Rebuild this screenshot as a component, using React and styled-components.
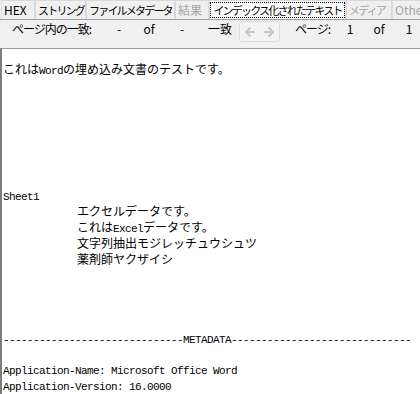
import React from "react";
import styled, { createGlobalStyle } from "styled-components";
import { ArrowLeft, ArrowRight } from "lucide-react";

const GlobalStyle = createGlobalStyle`
    html, body {
        margin: 0;
        padding: 0;
        background: #ffffff;
    }
`;

const tabs = [
    { label: "HEX", width: 34 },
    { label: "ストリング", width: 51, tight: true },
    { label: "ファイルメタデータ", width: 89, tight: true },
    { label: "結果", width: 34, disabled: true },
    { label: "インデックス化されたテキスト", width: 137, selected: true, tight: true },
    { label: "メディア", width: 46, disabled: true, tight: true },
    { label: "Other", width: 45, disabled: true },
];

const lines = [
    { text: "これはWordの埋め込み文書のテストです。" },
    { text: "" },
    { text: "" },
    { text: "" },
    { text: "" },
    { text: "" },
    { text: "" },
    { text: "" },
    { text: "Sheet1" },
    { text: "エクセルデータです。", indent: true },
    { text: "これはExcelデータです。", indent: true },
    { text: "文字列抽出モジレッチュウシュツ", indent: true },
    { text: "薬剤師ヤクザイシ", indent: true },
    { text: "" },
    { text: "" },
    { text: "" },
    { text: "" },
    { text: "-".repeat(30) + "METADATA" + "-".repeat(30) },
    { text: "" },
    { text: "Application-Name: Microsoft Office Word" },
    { text: "Application-Version: 16.0000" },
];

// split a line into ascii / wide runs so each gets its own font
const splitRuns = (text) => {
    const runs = [];
    for (const ch of text) {
        const wide = ch.charCodeAt(0) > 0x7f;
        const last = runs[runs.length - 1];
        if (last && last.wide === wide) last.text += ch;
        else runs.push({ wide, text: ch });
    }
    return runs;
};

const App = () => {
    return (
        <>
            <GlobalStyle />
            <Window>
                <TabBar>
                    {tabs.map((tab) => (
                        <Tab
                            key={tab.label}
                            $width={tab.width}
                            $disabled={tab.disabled}
                            $selected={tab.selected}
                            $tight={tab.tight}
                        >
                            <span>{tab.label}</span>
                        </Tab>
                    ))}
                </TabBar>
                <Toolbar>
                    <Cell $left={12} $width={94} $tight>ページ内の一致:</Cell>
                    <Cell $width={26} $center>-</Cell>
                    <Cell $width={34} $center>of</Cell>
                    <Cell $width={32} $center>-</Cell>
                    <Cell $left={10} $width={27}>一致</Cell>
                    <NavBox>
                        <NavButton>
                            <ArrowLeft size={14} strokeWidth={3.2} />
                        </NavButton>
                        <NavButton>
                            <ArrowRight size={14} strokeWidth={3.2} />
                        </NavButton>
                    </NavBox>
                    <Cell $left={15} $width={44} $tight>ページ:</Cell>
                    <Cell $width={22} $center>1</Cell>
                    <Cell $width={36} $center>of</Cell>
                    <Cell $width={24} $center>1</Cell>
                </Toolbar>
                <TextArea>
                    {lines.map((line, i) => (
                        <TextLine key={i} $indent={line.indent}>
                            {splitRuns(line.text).map((run, j) =>
                                run.wide ? <Wide key={j}>{run.text}</Wide> : <Narrow key={j}>{run.text}</Narrow>
                            )}
                        </TextLine>
                    ))}
                </TextArea>
            </Window>
        </>
    );
};

export default App;

const Window = styled.div`
    width: 420px;
    height: 394px;
    overflow: hidden;
    display: flex;
    flex-direction: column;
    background: #f0f0f0;
    font-family: "Noto Sans CJK JP", "Noto Sans", sans-serif;
`;

const TabBar = styled.div`
    display: flex;
    height: 19px;
    padding-left: 1px;
    background: #f0f0f0;
    white-space: nowrap;
`;

const Tab = styled.div`
    flex: none;
    box-sizing: border-box;
    width: ${(p) => p.$width}px;
    height: 19px;
    padding: 1px 0 0;
    border: 1px solid #d9d9d9;
    border-bottom: none;
    background: ${(p) => (p.$selected ? "#ffffff" : "#f0f0f0")};
    color: ${(p) => (p.$disabled ? "#a3a3a3" : "#000000")};
    font-size: ${(p) => (p.$tight ? 11 : 12)}px;
    line-height: 16px;
    text-align: ${(p) => (p.$selected ? "center" : "left")};
    overflow: hidden;

    & span {
        display: block;
        padding-left: ${(p) => (p.$selected ? 0 : 2)}px;
        outline: ${(p) => (p.$selected ? "1px dotted #000000" : "none")};
        outline-offset: -1px;
        letter-spacing: ${(p) => (p.$tight ? "-1.8px" : "0")};
    }
`;

const Toolbar = styled.div`
    display: flex;
    align-items: flex-start;
    height: 28px;
    border-top: 1px solid #a0a0a0;
    background: #f0f0f0;
    font-size: 12px;
    line-height: 16px;
    white-space: nowrap;
`;

const Cell = styled.div`
    flex: none;
    width: ${(p) => p.$width}px;
    margin-left: ${(p) => p.$left || 0}px;
    padding-top: 1px;
    text-align: ${(p) => (p.$center ? "center" : "left")};
    letter-spacing: ${(p) => (p.$tight ? "-1px" : "0")};
    color: #000000;
`;

const NavBox = styled.div`
    flex: none;
    display: flex;
    margin-top: 1px;
    margin-left: 4px;
    width: 41px;
    height: 21px;
    box-sizing: border-box;
    border: 1px solid #dcdcdc;
    border-radius: 3px;
    background: #f3f3f3;
`;

const NavButton = styled.div`
    flex: 1;
    display: flex;
    align-items: center;
    justify-content: center;
    color: #c4c4c4;
`;

const TextArea = styled.div`
    flex: 1;
    background: #ffffff;
    border-top: 1px solid #9a9a9a;
    border-left: 2px solid #7d7d7d;
    padding: 11px 0 0 1px;
    overflow: hidden;
`;

const TextLine = styled.div`
    height: 15.8px;
    line-height: 15.8px;
    padding-left: ${(p) => (p.$indent ? 74 : 0)}px;
    white-space: pre;
    color: #000000;
`;

const Narrow = styled.span`
    font-family: "Liberation Mono", "DejaVu Sans Mono", monospace;
    font-size: 11px;
    letter-spacing: -0.6px;
`;

const Wide = styled.span`
    font-family: "Noto Sans CJK JP", sans-serif;
    font-size: 12px;
`;
